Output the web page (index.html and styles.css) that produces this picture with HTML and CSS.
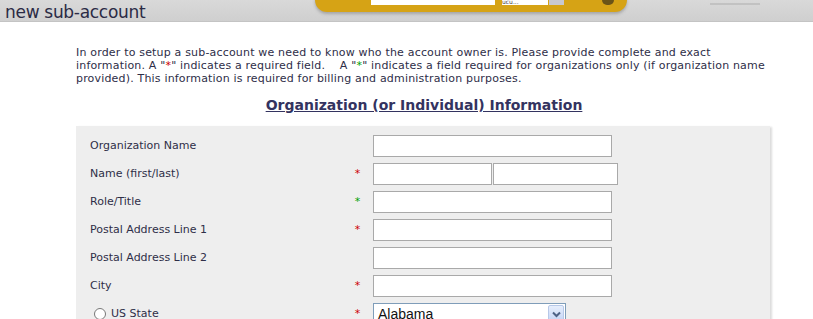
FILE: index.html
```html
<!DOCTYPE html>
<html lang="en">
<head>
    <meta charset="UTF-8">
    <title>new sub-account</title>
    <link rel="stylesheet" href="styles.css">
</head>
<body>
    <header class="topbar">
        <h1 class="page-title">new sub-account</h1>
        <div class="search-pill">
            <span class="search-box"></span>
            <span class="search-scope">ucu...</span>
            <span class="search-go"></span>
            <span class="search-knob"></span>
        </div>
        <span class="top-link"></span>
    </header>
    <main class="content">
        <p class="intro">In order to setup a sub-account we need to know who the account owner is. Please provide complete and exact<br>
        information. A "<span class="req">*</span>" indicates a required field. &nbsp; &nbsp;A "<span class="org">*</span>" indicates a field required for organizations only (if organization name<br>
        provided). This information is required for billing and administration purposes.</p>
        <h2 class="section-title">Organization (or Individual) Information</h2>
        <div class="panel">
            <div class="row">
                <label class="lbl">Organization Name</label>
                <span class="mark"></span>
                <div class="field"><input type="text" class="txt"></div>
            </div>
            <div class="row">
                <label class="lbl">Name (first/last)</label>
                <span class="mark req">*</span>
                <div class="field"><input type="text" class="txt half"><input type="text" class="txt half wide"></div>
            </div>
            <div class="row">
                <label class="lbl">Role/Title</label>
                <span class="mark org">*</span>
                <div class="field"><input type="text" class="txt"></div>
            </div>
            <div class="row">
                <label class="lbl">Postal Address Line 1</label>
                <span class="mark req">*</span>
                <div class="field"><input type="text" class="txt"></div>
            </div>
            <div class="row">
                <label class="lbl">Postal Address Line 2</label>
                <span class="mark"></span>
                <div class="field"><input type="text" class="txt"></div>
            </div>
            <div class="row">
                <label class="lbl">City</label>
                <span class="mark req">*</span>
                <div class="field"><input type="text" class="txt"></div>
            </div>
            <div class="row">
                <label class="lbl radio-lbl"><input type="radio" name="region" class="radio"> US State</label>
                <span class="mark req">*</span>
                <div class="field">
                    <div class="select">
                        <span class="select-text">Alabama</span>
                        <span class="select-btn">
                            <svg width="9" height="7" viewBox="0 0 9 7"><path d="M1 1.5 L4.5 5 L8 1.5" fill="none" stroke="#4d6185" stroke-width="2"/></svg>
                        </span>
                    </div>
                </div>
            </div>
            <div class="row">
                <label class="lbl">State / Province</label>
                <span class="mark"></span>
                <div class="field"><input type="text" class="txt"></div>
            </div>
        </div>
    </main>
</body>
</html>
```

FILE: styles.css
```css
body { margin: 0; padding: 0; font-family: "DejaVu Sans", Verdana, sans-serif; color: #2e2e48; background: white; }

.topbar { height: 22px; background: linear-gradient(#d9d9d9, #cfcfcf); border-bottom: 1px solid #c4c4c4; display: flex; align-items: flex-start; overflow: hidden; box-sizing: border-box; }
.page-title { margin: 0; padding: 3px 0 0 5px; font-size: 17px; font-weight: normal; line-height: 19px; color: #2b2b45; letter-spacing: -0.3px; width: 315px; box-sizing: border-box; }
.search-pill { width: 312px; height: 24px; margin-top: -12px; border-radius: 12px; background: #d6a315; box-shadow: 0 2px 3px rgba(80, 80, 80, 0.35); display: flex; align-items: flex-start; padding-top: 12px; box-sizing: border-box; }
.search-box { width: 124px; height: 5px; margin-left: 56px; background: white; }
.search-scope { width: 46px; height: 5px; margin-left: 7px; background: white; font-size: 6px; line-height: 4px; overflow: hidden; color: #444; }
.search-go { width: 15px; height: 5px; margin-left: 1px; background: #c8c8d0; }
.search-knob { width: 12px; height: 5px; margin-left: 38px; border-radius: 0 0 6px 6px; background: #6a5418; }
.top-link { width: 50px; height: 2px; margin: 3px 0 0 83px; background: #c2c2c2; }

.content { padding: 0 0 0 76px; }
.intro { margin: 0; padding-top: 24px; font-size: 11px; line-height: 13px; width: 700px; white-space: nowrap; letter-spacing: 0.18px; }
.req { color: #cc0000; }
.org { color: #00a000; }
.section-title { margin: 12px 0 0; width: 696px; text-align: center; font-size: 14px; line-height: 17px; font-weight: bold; text-decoration: underline; color: #333360; }

.panel { margin-top: 12px; width: 694px; background: #eeeeee; padding-top: 9px; box-shadow: 2px 1px 2px #dcdcdc; }
.row { display: flex; align-items: flex-start; height: 28px; }
.lbl { width: 261px; padding-left: 14px; font-size: 11px; line-height: 22px; color: #2e2e48; display: flex; align-items: center; }
.mark { width: 13px; margin-right: 9px; font-size: 11px; line-height: 22px; text-align: center; }
.field { display: flex; }
.txt { width: 239px; height: 22px; box-sizing: border-box; border: 1px solid #a9a9a9; background: white; margin: 0; padding: 0 2px; font-size: 12px; }
.half { width: 119px; }
.wide { width: 125px; margin-left: 1px; }
.radio-lbl { padding-left: 18px; width: 257px; }
.radio { margin: 0 5px 0 0; width: 12px; height: 12px; }
.select { width: 193px; height: 22px; box-sizing: border-box; border: 1px solid #7f9db9; background: white; display: flex; align-items: center; font-family: "Liberation Sans", Arial, sans-serif; font-size: 14px; color: #111; }
.select-text { flex: 1; padding-left: 4px; }
.select-btn { width: 16px; height: 18px; margin-right: 1px; border: 1px solid #b7c8e8; border-radius: 2px; background: linear-gradient(#e6eefc, #c3d3f5); display: flex; align-items: center; justify-content: center; box-sizing: border-box; }
```
